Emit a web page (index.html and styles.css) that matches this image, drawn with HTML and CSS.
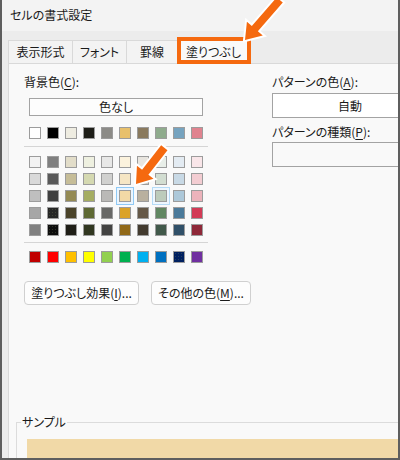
FILE: index.html
```html
<!DOCTYPE html>
<html lang="ja">
<head>
<meta charset="utf-8">
<title>セルの書式設定</title>
<link rel="stylesheet" href="styles.css">
</head>
<body>
<div class="window">
  <div class="titlebar">セルの書式設定</div>
  <div class="tabstrip">
    <div class="tab tab-1">表示形式</div>
    <div class="tab tab-2">フォント</div>
    <div class="tab tab-3">罫線</div>
    <div class="tab tab-4 active">塗りつぶし</div>
  </div>
  <div class="main">
    <div class="gutter"></div>
    <div class="panel">
      <div class="cols">
        <div class="left">
          <div class="label">背景色(<u>C</u>):</div>
          <div class="nocolor">色なし</div>
          <div class="swrow theme">
            <div class="sw" style="background:#ffffff"></div>
            <div class="sw" style="background:#000000"></div>
            <div class="sw" style="background:#eeece1"></div>
            <div class="sw" style="background:#1e1e18"></div>
            <div class="sw" style="background:#8c8b87"></div>
            <div class="sw" style="background:#e8c06b"></div>
            <div class="sw" style="background:#8a7a5e"></div>
            <div class="sw" style="background:#8fab8d"></div>
            <div class="sw" style="background:#76a3bf"></div>
            <div class="sw" style="background:#e0838f"></div>
          </div>
          <div class="sep sep-a"></div>
          <div class="grid">
            <div class="sw" style="background:#f2f2f2"></div>
            <div class="sw" style="background:#7f7f7f"></div>
            <div class="sw" style="background:#e2ddc9"></div>
            <div class="sw" style="background:#eef0e0"></div>
            <div class="sw" style="background:#e8e8e7"></div>
            <div class="sw" style="background:#fbf2dd"></div>
            <div class="sw" style="background:#e8e5df"></div>
            <div class="sw" style="background:#e8eee8"></div>
            <div class="sw" style="background:#e3ebf2"></div>
            <div class="sw" style="background:#f9e6e9"></div>

            <div class="sw" style="background:#d9d9d9"></div>
            <div class="sw" style="background:#595959"></div>
            <div class="sw" style="background:#c6bd98"></div>
            <div class="sw" style="background:#d5d9b1"></div>
            <div class="sw" style="background:#d1d1cf"></div>
            <div class="sw" style="background:#f6e6c4"></div>
            <div class="sw" style="background:#d0cabf"></div>
            <div class="sw" style="background:#d2ddd1"></div>
            <div class="sw" style="background:#c8d9e5"></div>
            <div class="sw" style="background:#f3cdd2"></div>

            <div class="sw" style="background:#bfbfbf"></div>
            <div class="sw" style="background:#404040"></div>
            <div class="sw" style="background:#948a54"></div>
            <div class="sw" style="background:#a5ad62"></div>
            <div class="sw" style="background:#bab9b7"></div>
            <div class="sw selected" style="background:#f2d9a6"></div>
            <div class="sw" style="background:#b9b09f"></div>
            <div class="sw hover" style="background:#bccbbb"></div>
            <div class="sw" style="background:#adc8d9"></div>
            <div class="sw" style="background:#ecb3bb"></div>

            <div class="sw" style="background:#a6a6a6"></div>
            <div class="sw dots" style="background-color:#262626"></div>
            <div class="sw" style="background:#4a4329"></div>
            <div class="sw" style="background:#5e6933"></div>
            <div class="sw" style="background:#686866"></div>
            <div class="sw" style="background:#dba226"></div>
            <div class="sw" style="background:#655847"></div>
            <div class="sw" style="background:#618762"></div>
            <div class="sw" style="background:#4b7a9a"></div>
            <div class="sw" style="background:#d23a55"></div>

            <div class="sw" style="background:#808080"></div>
            <div class="sw dots" style="background-color:#0d0d0d"></div>
            <div class="sw" style="background:#1f1e16"></div>
            <div class="sw" style="background:#313720"></div>
            <div class="sw" style="background:#434342"></div>
            <div class="sw" style="background:#906817"></div>
            <div class="sw" style="background:#433b2f"></div>
            <div class="sw" style="background:#41594a"></div>
            <div class="sw" style="background:#305068"></div>
            <div class="sw" style="background:#8e2838"></div>
          </div>
          <div class="sep sep-b"></div>
          <div class="swrow">
            <div class="sw" style="background:#c00000"></div>
            <div class="sw" style="background:#ff0000"></div>
            <div class="sw" style="background:#ffc000"></div>
            <div class="sw" style="background:#ffff00"></div>
            <div class="sw" style="background:#92d050"></div>
            <div class="sw" style="background:#00b050"></div>
            <div class="sw" style="background:#00b0f0"></div>
            <div class="sw" style="background:#0070c0"></div>
            <div class="sw dots" style="background-color:#002060"></div>
            <div class="sw" style="background:#7030a0"></div>
          </div>
          <div class="btns">
            <div class="btn btn-fx">塗りつぶし効果(<u>I</u>)...</div>
            <div class="btn btn-more">その他の色(<u>M</u>)...</div>
          </div>
        </div>
        <div class="right">
          <div class="label">パターンの色(<u>A</u>):</div>
          <div class="field">自動</div>
          <div class="label label-2">パターンの種類(<u>P</u>):</div>
          <div class="field field-2"></div>
        </div>
      </div>
      <fieldset class="sample">
        <legend>サンプル</legend>
        <div class="fill"></div>
      </fieldset>
    </div>
  </div>
  <svg class="arrows" width="400" height="460" viewBox="0 0 400 460" aria-hidden="true">
    <g fill="#f5690f" stroke="#ffffff" stroke-width="4" stroke-linejoin="miter" paint-order="stroke">
      <polygon points="0,0 -15,-10.5 -15,-4 -53,-4 -53,4 -15,4 -15,10.5" transform="translate(245,40) rotate(131)"/>
      <polygon points="0,0 -15,-10.5 -15,-4 -46,-4 -46,4 -15,4 -15,10.5" transform="translate(136,184) rotate(128)"/>
    </g>
  </svg>
</div>
</body>
</html>
```

FILE: styles.css
```css
* {
  box-sizing: border-box;
}

html,
body {
  margin: 0;
  padding: 0;
  background: #ffffff;
}

body {
  font-family: "Noto Sans CJK JP", "Noto Sans", sans-serif;
  font-size: 12px;
  line-height: 16px;
  color: #1a1a1a;
  font-feature-settings: "palt";
}

u {
  text-decoration: underline;
  text-underline-offset: 2px;
  text-decoration-thickness: 1px;
}

.window {
  position: relative;
  width: 400px;
  height: 460px;
  border: 2px solid #5e5e5e;
  border-top: 0;
  background: #ececec;
  overflow: hidden;
  display: flex;
  flex-direction: column;
}

.titlebar {
  height: 31px;
  flex-shrink: 0;
  background: #f3f3f3;
  padding-left: 8px;
  line-height: 30px;
}

.tabstrip {
  height: 32px;
  flex-shrink: 0;
  display: flex;
  align-items: flex-end;
  padding-left: 6px;
}

.tab {
  height: 23px;
  line-height: 22px;
  text-align: center;
  background: #f3f3f3;
  border: 1px solid #d9d9d9;
  border-bottom: 0;
  border-right: 0;
  white-space: nowrap;
}

.tab-1 {
  width: 64px;
}

.tab-2 {
  width: 54px;
}

.tab-3 {
  width: 51px;
}

.tab-4 {
  width: 73px;
}

.tab.active {
  height: 26px;
  line-height: 25px;
  margin-bottom: -1px;
  background: #f9f9f9;
  border-right: 1px solid #d9d9d9;
  position: relative;
  z-index: 2;
}

.tab.active::after {
  content: "";
  position: absolute;
  left: -1px;
  right: -2px;
  top: -2px;
  bottom: 0;
  border: 4px solid #f5690f;
}

.main {
  flex: 1;
  display: flex;
  min-height: 0;
}

.gutter {
  width: 6px;
  flex-shrink: 0;
}

.panel {
  flex: 1;
  min-width: 0;
  background: #f9f9f9;
  border-left: 1px solid #d9d9d9;
  border-top: 1px solid #d9d9d9;
  overflow: hidden;
  display: flex;
  flex-direction: column;
}

.cols {
  display: flex;
  padding: 10px 0 0 15px;
  flex-shrink: 0;
}

.left {
  width: 184px;
  flex-shrink: 0;
}

.right {
  margin-left: 64px;
  width: 156px;
  flex-shrink: 0;
}

.label {
  height: 16px;
  white-space: nowrap;
}

.nocolor {
  margin: 8px 0 0 5px;
  width: 174px;
  height: 18px;
  border: 1px solid #a3a3a3;
  background: #fdfdfd;
  text-align: center;
  line-height: 16px;
}

.swrow {
  display: flex;
  gap: 6px;
  padding-left: 5px;
}

.theme {
  margin-top: 11px;
}

.sw {
  width: 12px;
  height: 12px;
  border: 1px solid #9c9c9c;
  flex-shrink: 0;
}

.sw.dots {
  background-image: radial-gradient(circle, rgba(110, 120, 80, 0.35) 0.5px, transparent 0.8px);
  background-size: 3px 3px;
}

.sw.selected {
  box-shadow: 0 0 0 2px #eaf5ff, 0 0 0 3px #8fc9f5;
}

.sw.hover {
  box-shadow: 0 0 0 2px #eef7ff, 0 0 0 3px #b5dbf7;
}

.sep {
  height: 1px;
  background: #d5d5d5;
}

.sep-a {
  margin: 7px 0 9px;
}

.sep-b {
  margin: 6px 0 8px;
}

.grid {
  display: grid;
  grid-template-columns: repeat(10, 12px);
  column-gap: 6px;
  row-gap: 5px;
  padding-left: 5px;
}

.btns {
  display: flex;
  gap: 12px;
  margin-top: 18px;
}

.btn {
  flex-shrink: 0;
  height: 24px;
  border: 1px solid #d0d0d0;
  border-radius: 4px;
  background: #fdfdfd;
  line-height: 22px;
  text-align: center;
  white-space: nowrap;
}

.btn-fx {
  width: 115px;
}

.btn-more {
  width: 100px;
}

.field {
  margin-top: 3px;
  width: 156px;
  height: 25px;
  border: 1px solid #a3a3a3;
  background: #ffffff;
  text-align: center;
  line-height: 23px;
}

.label-2 {
  margin-top: 6px;
}

.field-2 {
  margin-top: 2px;
  background: #f9f9f9;
}

.sample {
  margin: 109px 0 0 7px;
  padding: 0;
  border: 1px solid #dcdcdc;
  width: 420px;
  min-width: 0;
  flex-shrink: 0;
}

.sample legend {
  margin-left: 4px;
  padding: 0 1px;
  line-height: 16px;
}

.fill {
  margin: 9px 0 0 10px;
  height: 40px;
  background: #f1d9a7;
}

.arrows {
  position: absolute;
  left: -2px;
  top: 0;
  pointer-events: none;
  z-index: 5;
}
```
